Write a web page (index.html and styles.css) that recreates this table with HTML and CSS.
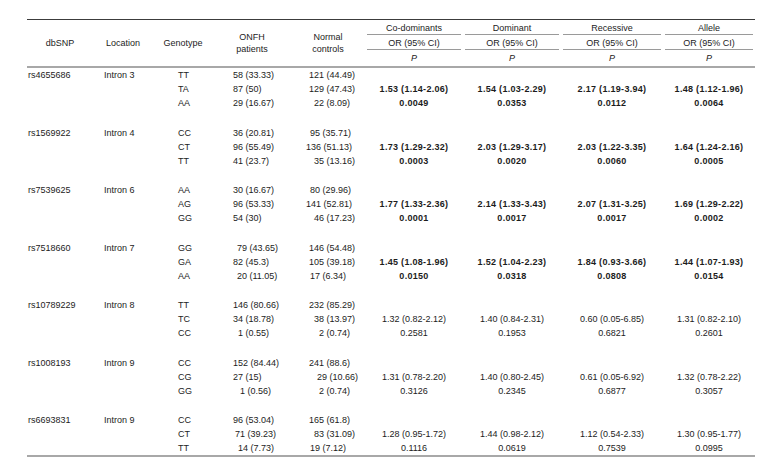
FILE: index.html
```html
<!DOCTYPE html>
<html>
<head>
<meta charset="utf-8">
<link rel="stylesheet" href="styles.css">
</head>
<body>
<div class="page">
<table class="snp">
<colgroup>
<col class="c-snp"><col class="c-loc"><col class="c-gen"><col class="c-onfh"><col class="c-norm">
<col class="c-codom"><col class="c-dom"><col class="c-rec"><col class="c-all">
</colgroup>
<thead>
<tr class="h1">
<th rowspan="3" class="hb">dbSNP</th>
<th rowspan="3" class="hb">Location</th>
<th rowspan="3" class="hb">Genotype</th>
<th rowspan="3" class="hb">ONFH<br>patients</th>
<th rowspan="3" class="hb">Normal<br>controls</th>
<th class="sub">Co-dominants</th>
<th class="sub">Dominant</th>
<th class="sub">Recessive</th>
<th class="sub">Allele</th>
</tr>
<tr class="h2">
<th class="sub">OR (95% CI)</th>
<th class="sub">OR (95% CI)</th>
<th class="sub">OR (95% CI)</th>
<th class="sub">OR (95% CI)</th>
</tr>
<tr class="h3">
<th class="hb"><i>P</i></th>
<th class="hb"><i>P</i></th>
<th class="hb"><i>P</i></th>
<th class="hb"><i>P</i></th>
</tr>
</thead>
<tbody>
<tr><td class="snp-id">rs4655686</td><td class="loc">Intron 3</td><td class="gen">TT</td><td class="onfh">58 (33.33)</td><td class="norm in3">121 (44.49)</td><td></td><td></td><td></td><td></td></tr>
<tr class="b"><td></td><td></td><td class="gen">TA</td><td class="onfh">87 (50)</td><td class="norm in3">129 (47.43)</td><td>1.53 (1.14-2.06)</td><td>1.54 (1.03-2.29)</td><td>2.17 (1.19-3.94)</td><td>1.48 (1.12-1.96)</td></tr>
<tr class="b"><td></td><td></td><td class="gen">AA</td><td class="onfh">29 (16.67)</td><td class="norm in8">22 (8.09)</td><td>0.0049</td><td>0.0353</td><td>0.0112</td><td>0.0064</td></tr>
<tr class="gap"><td colspan="9"></td></tr>

<tr><td class="snp-id">rs1569922</td><td class="loc">Intron 4</td><td class="gen">CC</td><td class="onfh">36 (20.81)</td><td class="norm in4">95 (35.71)</td><td></td><td></td><td></td><td></td></tr>
<tr class="b"><td></td><td></td><td class="gen">CT</td><td class="onfh">96 (55.49)</td><td class="norm">136 (51.13)</td><td>1.73 (1.29-2.32)</td><td>2.03 (1.29-3.17)</td><td>2.03 (1.22-3.35)</td><td>1.64 (1.24-2.16)</td></tr>
<tr class="b"><td></td><td></td><td class="gen">TT</td><td class="onfh">41 (23.7)</td><td class="norm in8">35 (13.16)</td><td>0.0003</td><td>0.0020</td><td>0.0060</td><td>0.0005</td></tr>
<tr class="gap"><td colspan="9"></td></tr>

<tr><td class="snp-id">rs7539625</td><td class="loc">Intron 6</td><td class="gen">AA</td><td class="onfh">30 (16.67)</td><td class="norm in4">80 (29.96)</td><td></td><td></td><td></td><td></td></tr>
<tr class="b"><td></td><td></td><td class="gen">AG</td><td class="onfh">96 (53.33)</td><td class="norm">141 (52.81)</td><td>1.77 (1.33-2.36)</td><td>2.14 (1.33-3.43)</td><td>2.07 (1.31-3.25)</td><td>1.69 (1.29-2.22)</td></tr>
<tr class="b"><td></td><td></td><td class="gen">GG</td><td class="onfh">54 (30)</td><td class="norm in8">46 (17.23)</td><td>0.0001</td><td>0.0017</td><td>0.0017</td><td>0.0002</td></tr>
<tr class="gap"><td colspan="9"></td></tr>

<tr><td class="snp-id">rs7518660</td><td class="loc">Intron 7</td><td class="gen">GG</td><td class="onfh in4">79 (43.65)</td><td class="norm in3">146 (54.48)</td><td></td><td></td><td></td><td></td></tr>
<tr class="b"><td></td><td></td><td class="gen">GA</td><td class="onfh">82 (45.3)</td><td class="norm in3">105 (39.18)</td><td>1.45 (1.08-1.96)</td><td>1.52 (1.04-2.23)</td><td>1.84 (0.93-3.66)</td><td>1.44 (1.07-1.93)</td></tr>
<tr class="b"><td></td><td></td><td class="gen">AA</td><td class="onfh in4">20 (11.05)</td><td class="norm in4">17 (6.34)</td><td>0.0150</td><td>0.0318</td><td>0.0808</td><td>0.0154</td></tr>
<tr class="gap"><td colspan="9"></td></tr>

<tr><td class="snp-id">rs10789229</td><td class="loc">Intron 8</td><td class="gen">TT</td><td class="onfh">146 (80.66)</td><td class="norm in3">232 (85.29)</td><td></td><td></td><td></td><td></td></tr>
<tr><td></td><td></td><td class="gen">TC</td><td class="onfh">34 (18.78)</td><td class="norm in8">38 (13.97)</td><td>1.32 (0.82-2.12)</td><td>1.40 (0.84-2.31)</td><td>0.60 (0.05-6.85)</td><td>1.31 (0.82-2.10)</td></tr>
<tr><td></td><td></td><td class="gen">CC</td><td class="onfh in5">1 (0.55)</td><td class="norm in13">2 (0.74)</td><td>0.2581</td><td>0.1953</td><td>0.6821</td><td>0.2601</td></tr>
<tr class="gap"><td colspan="9"></td></tr>

<tr><td class="snp-id">rs1008193</td><td class="loc">Intron 9</td><td class="gen">CC</td><td class="onfh">152 (84.44)</td><td class="norm in3">241 (88.6)</td><td></td><td></td><td></td><td></td></tr>
<tr><td></td><td></td><td class="gen">CG</td><td class="onfh">27 (15)</td><td class="norm in11">29 (10.66)</td><td>1.31 (0.78-2.20)</td><td>1.40 (0.80-2.45)</td><td>0.61 (0.05-6.92)</td><td>1.32 (0.78-2.22)</td></tr>
<tr><td></td><td></td><td class="gen">GG</td><td class="onfh in7">1 (0.56)</td><td class="norm in13">2 (0.74)</td><td>0.3126</td><td>0.2345</td><td>0.6877</td><td>0.3057</td></tr>
<tr class="gap"><td colspan="9"></td></tr>

<tr><td class="snp-id">rs6693831</td><td class="loc">Intron 9</td><td class="gen">CC</td><td class="onfh">96 (53.04)</td><td class="norm in3">165 (61.8)</td><td></td><td></td><td></td><td></td></tr>
<tr><td></td><td></td><td class="gen">CT</td><td class="onfh in2">71 (39.23)</td><td class="norm in8">83 (31.09)</td><td>1.28 (0.95-1.72)</td><td>1.44 (0.98-2.12)</td><td>1.12 (0.54-2.33)</td><td>1.30 (0.95-1.77)</td></tr>
<tr class="last"><td></td><td></td><td class="gen">TT</td><td class="onfh in5">14 (7.73)</td><td class="norm in4">19 (7.12)</td><td>0.1116</td><td>0.0619</td><td>0.7539</td><td>0.0995</td></tr>
</tbody>
</table>
</div>
</body>
</html>
```
FILE: styles.css
```css
html, body {
  margin: 0;
  padding: 0;
  background: #ffffff;
}

.page {
  padding: 19px 0 0 27px;
}

.snp {
  border-collapse: separate;
  border-spacing: 0;
  table-layout: fixed;
  width: 728px;
  font-family: "Liberation Sans", Arial, sans-serif;
  font-size: 9px;
  color: #1c1c1c;
}

.c-snp { width: 66px; }
.c-loc { width: 60px; }
.c-gen { width: 60px; }
.c-onfh { width: 78px; }
.c-norm { width: 74px; }
.c-codom { width: 98px; }
.c-dom { width: 98px; }
.c-rec { width: 102px; }
.c-all { width: 92px; }

.snp th {
  font-weight: normal;
  padding: 0;
  text-align: center;
  vertical-align: middle;
  line-height: 12px;
}

.h1 th {
  border-top: 1.5px solid #3c3c3c;
  height: 15px;
}

.h2 th {
  height: 15px;
}

.h3 th {
  height: 16px;
}

.snp th.hb {
  border-bottom: 2px solid #a8a8a8;
}

.snp th.sub {
  background-image: linear-gradient(#9a9a9a, #9a9a9a);
  background-repeat: no-repeat;
  background-size: calc(100% - 4px) 1px;
  background-position: center bottom;
}

.snp td {
  padding: 0;
  height: 14px;
  line-height: 14px;
  text-align: center;
  white-space: nowrap;
}

.snp tr.b td {
  font-weight: bold;
  letter-spacing: 0.3px;
}

.snp tr.b td.gen,
.snp tr.b td.onfh,
.snp tr.b td.norm {
  font-weight: normal;
  letter-spacing: 0;
}

.snp td.snp-id {
  text-align: left;
  padding-left: 1px;
}

.snp td.loc {
  text-align: left;
  padding-left: 11px;
}

.snp td.gen {
  text-align: left;
  padding-left: 25px;
}

.snp td.onfh {
  text-align: left;
  padding-left: 20px;
}

.snp td.norm {
  text-align: left;
  padding-left: 15px;
}

.snp td.onfh.in2 { padding-left: 22px; }
.snp td.onfh.in4 { padding-left: 24px; }
.snp td.onfh.in5 { padding-left: 25px; }
.snp td.onfh.in7 { padding-left: 27px; }

.snp td.norm.in3 { padding-left: 18px; }
.snp td.norm.in4 { padding-left: 19px; }
.snp td.norm.in8 { padding-left: 23px; }
.snp td.norm.in11 { padding-left: 26px; }
.snp td.norm.in13 { padding-left: 28px; }

.snp tr.gap td {
  height: 15.5px;
  line-height: 0;
}

.snp tr.last td {
  border-bottom: 2px solid #a8a8a8;
}

.snp tbody tr:first-child td {
  padding-top: 0;
}
```
